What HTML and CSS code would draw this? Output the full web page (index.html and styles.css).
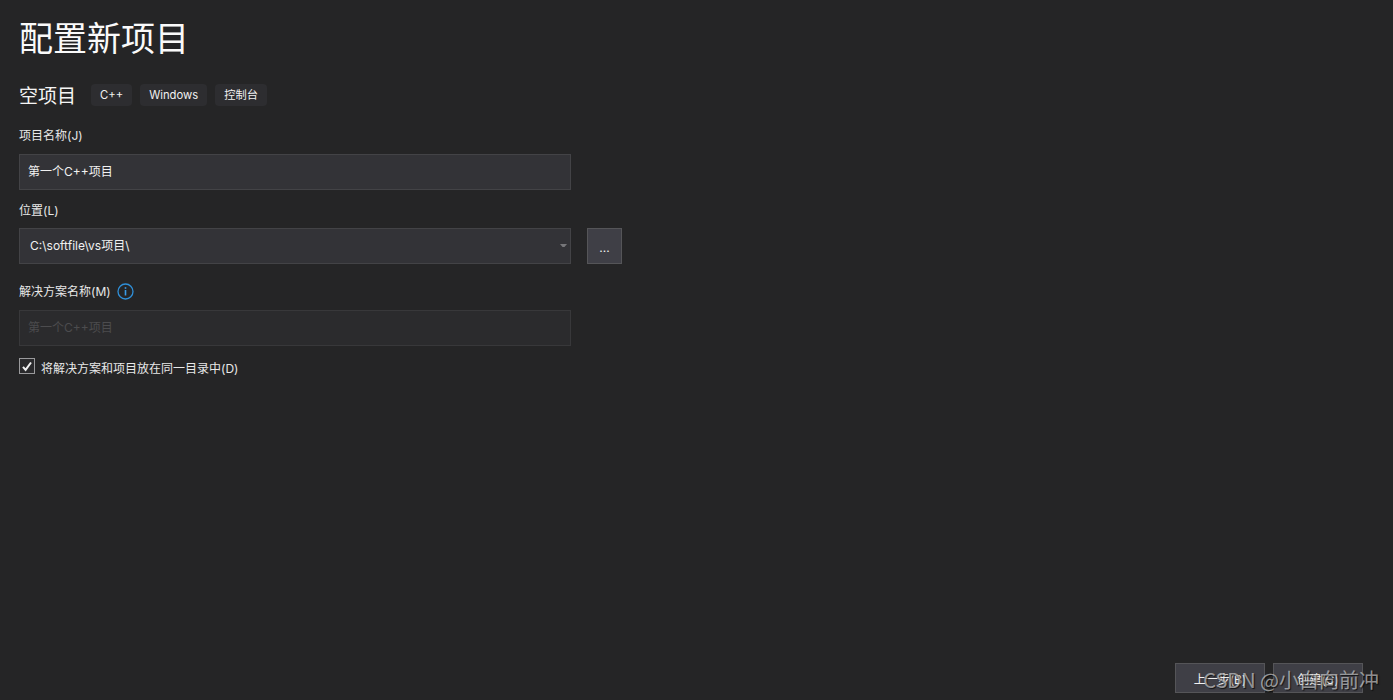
FILE: index.html
```html
<!DOCTYPE html>
<html lang="zh-CN">
<head>
<meta charset="utf-8">
<title>配置新项目</title>
<link rel="stylesheet" href="styles.css">
</head>
<body>
<main class="page">
  <h1 class="title">配置新项目</h1>
  <div class="subhead">
    <h2 class="subtitle">空项目</h2>
    <ul class="tags">
      <li class="tag">C++</li>
      <li class="tag">Windows</li>
      <li class="tag">控制台</li>
    </ul>
  </div>
  <label class="label label-name">项目名称(J)</label>
  <div class="input">第一个C++项目</div>
  <label class="label label-loc">位置(L)</label>
  <div class="loc-row">
    <div class="input select">
      <span class="select-text">C:\softfile\vs项目\</span>
      <svg class="caret" width="7" height="4" viewBox="0 0 7 4"><path d="M0 0h7L4.5 3h-2z" fill="#77777a"/></svg>
    </div>
    <button class="browse">...</button>
  </div>
  <div class="label label-sol">
    <span>解决方案名称(M)</span>
    <svg class="info" width="17" height="17" viewBox="0 0 17 17" fill="none"><circle cx="8.5" cy="8.5" r="7.5" stroke="#2f8fd8" stroke-width="1.3"/><rect x="7.7" y="7" width="1.6" height="5.5" fill="#3a9be6"/><rect x="7.7" y="4.2" width="1.6" height="1.6" fill="#3a9be6"/></svg>
  </div>
  <div class="input disabled">第一个C++项目</div>
  <div class="check-row">
    <span class="checkbox"><svg width="12" height="11" viewBox="0 0 12 11" fill="none"><path d="M2 5.8l2.6 3L10 1.5" stroke="#f1f1f1" stroke-width="2"/></svg></span>
    <span class="check-label">将解决方案和项目放在同一目录中(D)</span>
  </div>
  <footer class="footer">
    <button class="btn">上一步(B)</button>
    <button class="btn">创建(C)</button>
  </footer>
</main>
<div class="watermark">CSDN @小白向前冲</div>
</body>
</html>
```
FILE: styles.css
```css
* { box-sizing: border-box; }
html, body { margin: 0; height: 700px; overflow: hidden; }
body {
  position: relative;
  background: #252526;
  color: #f1f1f1;
  font-family: Inter, "Noto Sans CJK SC", sans-serif;
  font-size: 12px;
}
.page {
  display: flex;
  flex-direction: column;
  align-items: flex-start;
  height: 700px;
  padding: 0 30px 7px 19px;
}
.title {
  margin: 17px 0 0;
  font-size: 34px;
  line-height: 44px;
  font-weight: 400;
  color: #fafafa;
}
.subhead {
  display: flex;
  align-items: center;
  margin-top: 23px;
  height: 22px;
}
.subtitle {
  margin: 3px 15px 0 0;
  font-size: 19px;
  line-height: 22px;
  font-weight: 400;
  color: #f5f5f5;
}
.tags {
  display: flex;
  gap: 8px;
  margin: 0;
  padding: 0;
  list-style: none;
}
.tag {
  height: 22px;
  padding: 0 9px;
  line-height: 22px;
  font-size: 11.25px;
  background: #2d2d30;
  border-radius: 4px;
  color: #f1f1f1;
}
.label {
  font-size: 12px;
  line-height: 16px;
  color: #e8e8e8;
}
.label-name { margin-top: 22px; }
.label-loc { margin-top: 13px; }
.label-sol {
  display: flex;
  align-items: center;
  gap: 6px;
  margin-top: 19px;
  height: 17px;
}
.input {
  display: flex;
  align-items: center;
  width: 552px;
  height: 36px;
  padding: 0 8px 4px;
  background: #333337;
  border: 1px solid #434346;
  color: #f1f1f1;
  font-size: 12px;
}
.label-name + .input { margin-top: 10px; }
.label-loc + .loc-row { margin-top: 9px; }
.label-sol + .input { margin-top: 10px; }
.loc-row {
  display: flex;
  gap: 16px;
}
.select { justify-content: space-between; padding: 0 3px 4px 10px; }
.caret { margin-top: 4px; }
.browse {
  width: 35px;
  height: 36px;
  padding: 3px 0 0;
  background: #3f3f46;
  border: 1px solid #555558;
  color: #f1f1f1;
  font: 12px Inter, sans-serif;
}
.disabled {
  background: #2b2b2d;
  border-color: #38383a;
  color: #4c4c4e;
}
.check-row {
  display: flex;
  align-items: flex-start;
  gap: 6px;
  margin-top: 12px;
  height: 18px;
}
.checkbox {
  display: flex;
  align-items: center;
  justify-content: center;
  width: 16px;
  height: 16px;
  background: #2a2a2c;
  border: 1px solid #9a9a9c;
}
.check-label {
  line-height: 18px;
  margin-top: 2px;
  color: #e8e8e8;
}
.footer {
  display: flex;
  gap: 8px;
  margin-top: auto;
  align-self: flex-end;
}
.btn {
  width: 90px;
  height: 30px;
  padding: 0;
  background: #3f3f46;
  border: 1px solid #555558;
  color: #f1f1f1;
  font: 12px Inter, "Noto Sans CJK SC", sans-serif;
}
.watermark {
  position: absolute;
  right: 14px;
  top: 665px;
  font-size: 20px;
  line-height: 30px;
  color: rgba(225, 225, 225, 0.62);
  text-shadow: 1px 1px 1px rgba(0, 0, 0, 0.7);
  font-family: "Noto Sans CJK SC", sans-serif;
}
```
